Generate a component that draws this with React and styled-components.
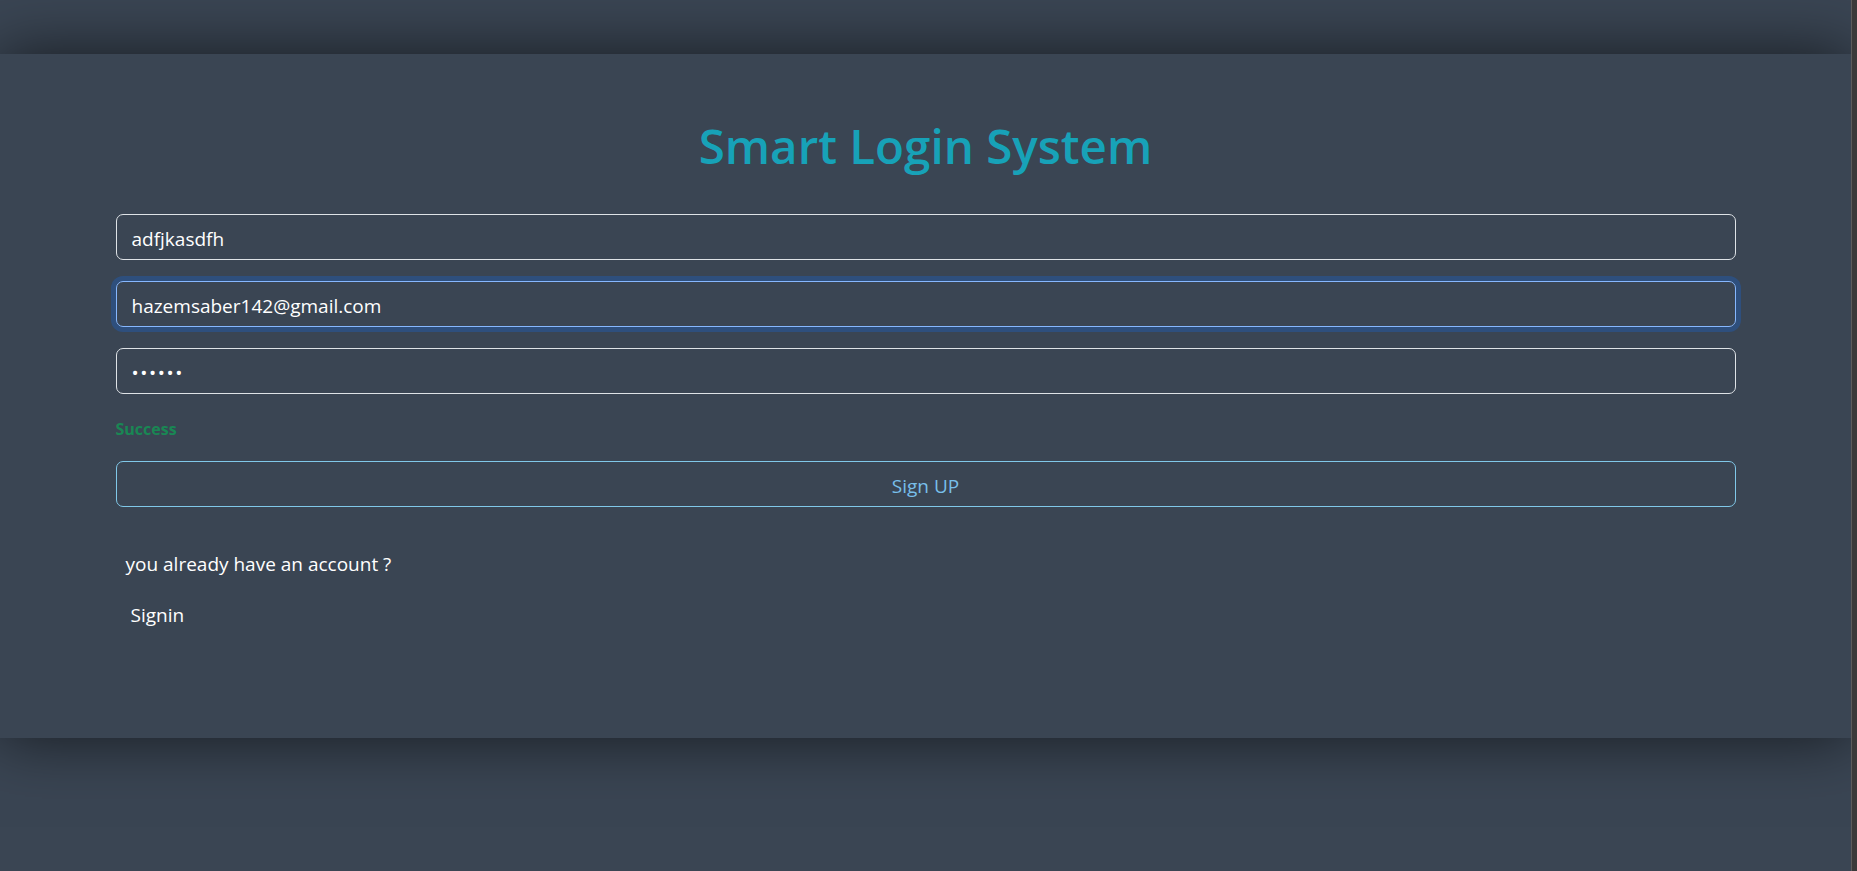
import React from "react";
import styled, { createGlobalStyle } from "styled-components";

const Global = createGlobalStyle`
  html, body {
    margin: 0;
    padding: 0;
    background: #3a4553;
    overflow: hidden;
  }
  body {
    font-family: "Open Sans", "Noto Sans", sans-serif;
    color: #ffffff;
  }
  * { box-sizing: border-box; }
`;

const Frame = styled.div`
  display: flex;
  min-height: 100vh;
  width: 100vw;
`;

const Page = styled.main`
  flex: 1;
  padding-top: 54px;
  min-width: 0;
`;

const WindowEdge = styled.div`
  width: 6px;
  flex: none;
  background: #3a3a3a;
  border-left: 1px solid #5c5c5c;
`;

const Card = styled.section`
  background: #3a4553;
  height: 684px;
  padding-top: 62px;
  box-shadow: 0 0 60px rgba(0, 0, 0, 0.62);
`;

const Container = styled.div`
  max-width: 1650px;
  margin: 0 auto;
  padding: 0 15px;
`;

const Title = styled.h1`
  margin: 0 0 38px;
  text-align: center;
  font-size: 47.5px;
  line-height: 60px;
  font-weight: 600;
  color: #17a2b8;
`;

const Field = styled.input`
  display: block;
  width: 100%;
  height: 46px;
  margin: 0 0 21px;
  padding: 3px 15px 0;
  background: transparent;
  border: 1px solid ${(p) => (p.$focused ? "#86b7fe" : "#dee2e6")};
  border-radius: 7px;
  color: #ffffff;
  font-family: "Open Sans", "Noto Sans", sans-serif;
  font-size: 19px;
  letter-spacing: ${(p) => (p.type === "password" ? "1.6px" : "normal")};
  outline: none;
  box-shadow: ${(p) => (p.$focused ? "0 0 0 5px rgba(13, 110, 253, 0.25)" : "none")};
`;

const Status = styled.p`
  margin: 22px 0 19px;
  font-size: 16px;
  line-height: 26px;
  font-weight: 700;
  color: #198754;
`;

const SubmitButton = styled.button`
  display: block;
  width: 100%;
  height: 46px;
  padding: 3px 0 0;
  background: transparent;
  border: 1px solid #80c8e8;
  border-radius: 7px;
  color: #78bfea;
  font-family: "Open Sans", "Noto Sans", sans-serif;
  font-size: 19px;
  cursor: pointer;
`;

const Prompt = styled.p`
  margin: 42px 0 0;
  padding: 0 10px;
  font-size: 19px;
  line-height: 30px;
  color: #ffffff;
`;

const LinkButton = styled.a`
  display: inline-block;
  margin-top: 21px;
  padding: 0 15px;
  font-size: 19px;
  line-height: 30px;
  color: #ffffff;
  text-decoration: none;
  cursor: pointer;
`;

export default function App() {
  return (
    <>
      <Global />
      <Frame>
        <Page>
          <Card>
            <Container>
              <Title>Smart Login System</Title>
              <Field type="text" defaultValue="adfjkasdfh" />
              <Field type="email" defaultValue="hazemsaber142@gmail.com" $focused />
              <Field type="password" defaultValue="123456" />
              <Status>Success</Status>
              <SubmitButton type="button">Sign UP</SubmitButton>
              <Prompt>you already have an account ?</Prompt>
              <LinkButton>Signin</LinkButton>
            </Container>
          </Card>
        </Page>
        <WindowEdge />
      </Frame>
    </>
  );
}
